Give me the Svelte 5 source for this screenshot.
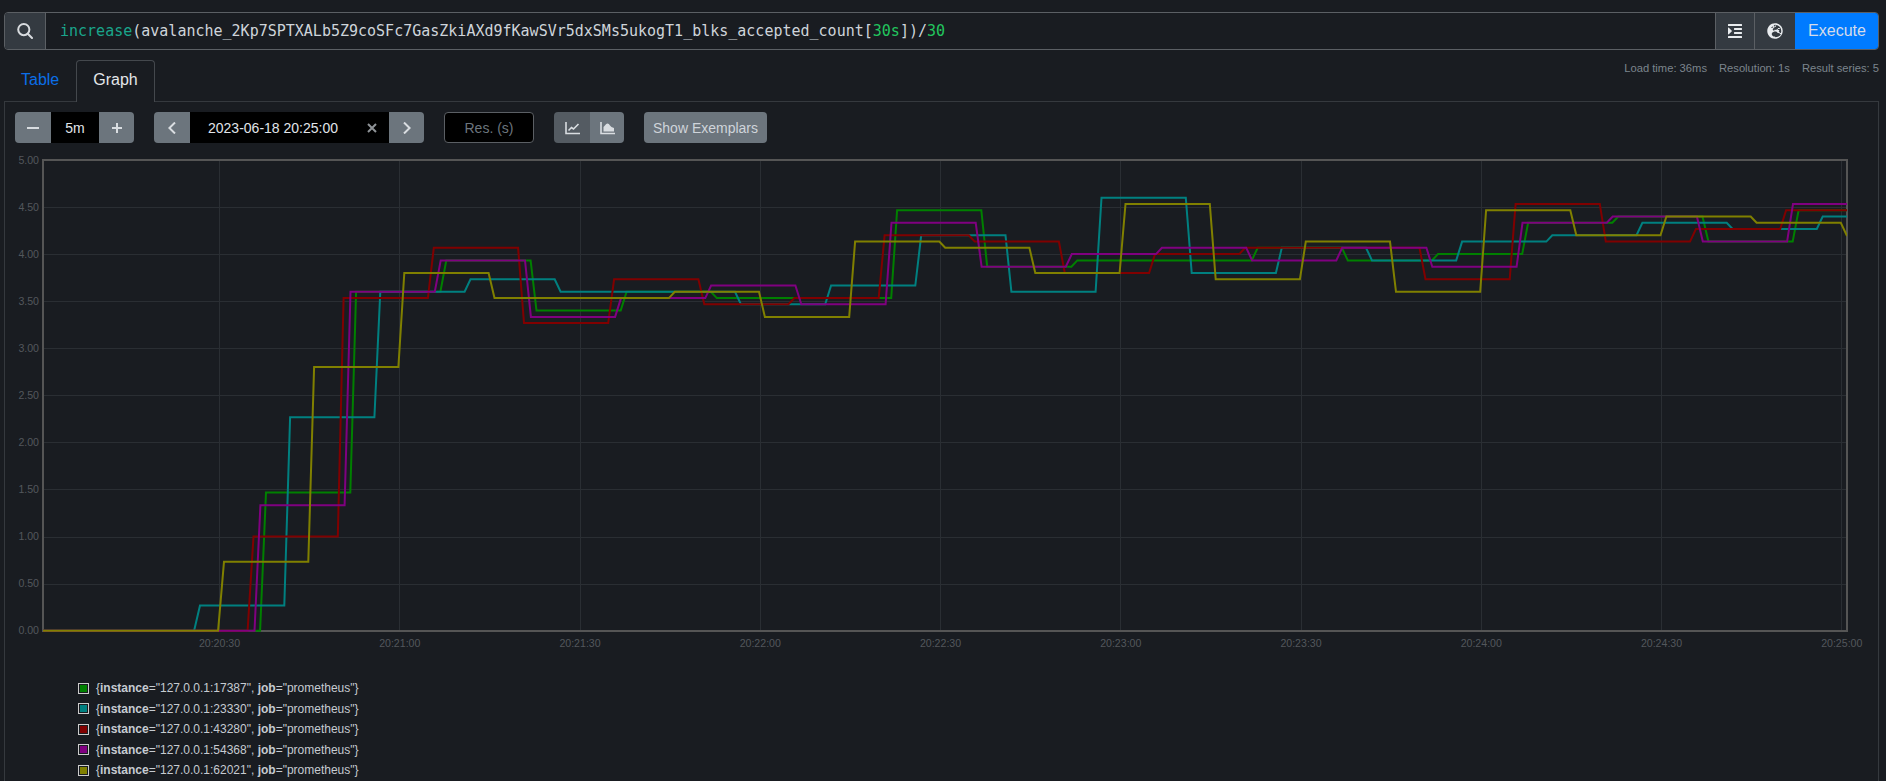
<script>
  const X0 = 43, X1 = 1847, Y0 = 630.7, UNIT = 94.14, STEP = 90.15, RAMP = 5.9;
  const yOf = (v) => Y0 - v * UNIT;
  const series = [
    { color: '#008000', port: '17387', t0: 266, values: [1.467,3.6,3.933,3.4,3.6,3.533,3.533,4.467,3.867,3.933,3.933,4.067,3.933,4,4.333,4.4,4.133,4.467] },
    { color: '#008080', port: '23330', t0: 200, values: [0.267,2.267,3.6,3.733,3.6,3.6,3.467,3.667,4.2,3.6,4.6,3.8,4.067,3.933,4.133,4.2,4.333,4.267,4.4] },
    { color: '#800000', port: '43280', t0: 253.5, values: [1,3.533,4.067,3.267,3.733,3.467,3.533,4.2,4.133,3.8,4,4.067,4.067,3.733,4.533,4.133,4.267,4.467] },
    { color: '#800080', port: '54368', t0: 260.4, values: [1.333,3.6,3.933,3.333,3.533,3.667,3.467,4.333,3.867,4,4.067,3.933,4.067,3.867,4.333,4.4,4.133,4.533] },
    { color: '#808000', port: '62021', t0: 224, values: [0.733,2.8,3.8,3.533,3.533,3.6,3.333,4.133,4.067,3.8,4.533,3.733,4.133,3.6,4.467,4.2,4.4,4.333,4.2] }
  ];
  const pathOf = (s) => {
    const pts = [[X0, 0]];
    let prev = 0;
    s.values.forEach((v, k) => {
      const x = s.t0 + k * STEP;
      pts.push([x - RAMP, prev], [x, v]);
      prev = v;
    });
    pts.push([X1 + 10, prev]);
    return pts.map(([x, v]) => `${x.toFixed(1)},${yOf(v).toFixed(1)}`).join(' ');
  };
  const yTicks = [0, 0.5, 1, 1.5, 2, 2.5, 3, 3.5, 4, 4.5, 5];
  const xTicks = ['20:20:30','20:21:00','20:21:30','20:22:00','20:22:30','20:23:00','20:23:30','20:24:00','20:24:30','20:25:00']
    .map((label, i) => ({ label, x: 219 + i * 180.25 }));
</script>

<div class="page">
  <div class="query">
    <div class="addon search">
      <svg class="stroke" viewBox="0 0 16 16" width="16" height="16"><circle cx="6.8" cy="6.6" r="5.6"/><path d="M10.8 10.8L15 15" stroke-linecap="round"/></svg>
    </div>
    <div class="expr"><span class="fn">increase</span>(avalanche_2Kp7SPTXALb5Z9coSFc7GasZkiAXd9fKawSVr5dxSMs5ukogT1_blks_accepted_count[<span class="num">30s</span>])/<span class="num">30</span></div>
    <div class="addon fmt">
      <svg viewBox="0 0 448 512" width="14" height="16"><path fill="currentColor" d="M27.31 363.3l96-96a16 16 0 0 0 0-22.62l-96-96C17.27 138.66 0 145.78 0 160v192c0 14.31 17.33 21.3 27.31 11.3zM432 416H16a16 16 0 0 0-16 16v32a16 16 0 0 0 16 16h416a16 16 0 0 0 16-16v-32a16 16 0 0 0-16-16zm3.17-128H204.83A12.82 12.82 0 0 0 192 300.83v38.34A12.82 12.82 0 0 0 204.83 352h230.34A12.82 12.82 0 0 0 448 339.17v-38.34A12.82 12.82 0 0 0 435.17 288zm0-128H204.83A12.82 12.82 0 0 0 192 172.83v38.34A12.82 12.82 0 0 0 204.83 224h230.34A12.82 12.82 0 0 0 448 211.17v-38.34A12.82 12.82 0 0 0 435.17 160zM432 32H16A16 16 0 0 0 0 48v32a16 16 0 0 0 16 16h416a16 16 0 0 0 16-16V48a16 16 0 0 0-16-16z"/></svg>
    </div>
    <div class="addon globe">
      <svg viewBox="0 0 496 512" width="16" height="16"><path fill="currentColor" d="M248 8C111 8 0 119 0 256s111 248 248 248 248-111 248-248S385 8 248 8zm200 248c0 22.5-3.9 44.2-10.8 64.4h-20.3c-4.3 0-8.4-1.7-11.4-4.8l-32-32.6c-4.5-4.6-4.5-12.1.1-16.7l12.5-12.5v-8.7c0-3-1.2-5.9-3.3-8l-9.4-9.4c-2.1-2.1-5-3.3-8-3.3h-16c-6.2 0-11.3-5.1-11.3-11.3 0-3 1.2-5.9 3.3-8l9.4-9.4c2.1-2.1 5-3.3 8-3.3h32c6.2 0 11.3-5.1 11.3-11.3v-9.4c0-6.2-5.1-11.3-11.3-11.3h-36.7c-8.8 0-16 7.2-16 16v4.5c0 6.9-4.4 13-10.9 15.2l-31.6 10.5c-3.3 1.1-5.5 4.1-5.5 7.6v2.2c0 4.4-3.6 8-8 8h-16c-4.4 0-8-3.6-8-8s-3.6-8-8-8H247c-3 0-5.8 1.7-7.2 4.4l-9.4 18.7c-2.7 5.4-8.2 8.8-14.3 8.8H194c-8.8 0-16-7.2-16-16V199c0-4.2 1.7-8.3 4.7-11.3l20.1-20.1c4.6-4.6 7.2-10.9 7.2-17.5 0-3.4 2.2-6.5 5.5-7.6l40-13.3c1.7-.6 3.2-1.5 4.4-2.7l26.8-26.8c2.1-2.1 3.3-5 3.3-8 0-6.2-5.1-11.3-11.3-11.3H258l-16 16v8c0 4.4-3.6 8-8 8h-16c-4.4 0-8-3.6-8-8v-20c0-2.5 1.2-4.9 3.2-6.4l28.9-21.7c1.9-.1 3.8-.3 5.7-.3C358.3 56 448 145.7 448 256zM130.1 149.1c0-3 1.2-5.9 3.3-8l25.4-25.4c2.1-2.1 5-3.3 8-3.3 6.2 0 11.3 5.1 11.3 11.3v16c0 3-1.2 5.9-3.3 8l-9.4 9.4c-2.1 2.1-5 3.3-8 3.3h-16c-6.2 0-11.3-5.1-11.3-11.3zm128 306.4v-7.1c0-8.8-7.2-16-16-16h-20.2c-10.8 0-26.7-5.3-35.4-11.8l-22.2-16.7c-11.5-8.6-18.2-22.1-18.2-36.4v-23.9c0-16 8.4-30.8 22.1-39l42.9-25.7c7.1-4.2 15.2-6.5 23.4-6.5h31.2c10.9 0 21.4 3.9 29.6 10.9l43.2 37.1h18.3c17 0 33.3 6.7 45.3 18.7l17.3 17.3c5 5 11.8 7.8 18.9 7.8h5.4C400.9 420.6 333.5 452.4 258.1 455.5z"/></svg>
    </div>
    <button class="execute">Execute</button>
  </div>

  <div class="tabs">
    <span class="tab">Table</span>
    <span class="tab active">Graph</span>
    <div class="stats">
      <span>Load time: 36ms</span><span>Resolution: 1s</span><span>Result series: 5</span>
    </div>
  </div>

  <div class="panel">
    <div class="controls">
      <div class="group range">
        <span class="btn sq"><svg class="stroke" viewBox="0 0 12 12" width="12" height="12"><path d="M0 6H12"/></svg></span>
        <span class="field w48">5m</span>
        <span class="btn sq"><svg class="stroke" viewBox="0 0 12 12" width="12" height="12"><path d="M1 6H11M6 1V11"/></svg></span>
      </div>
      <div class="group date">
        <span class="btn sq"><svg class="stroke" viewBox="0 0 8 12" width="8" height="12"><path d="M7 .5L1.4 6L7 11.5"/></svg></span>
        <span class="field w199">
          <span>2023-06-18 20:25:00</span>
          <svg class="stroke clear" viewBox="0 0 10 10" width="10" height="10"><path d="M1 1L9 9M9 1L1 9"/></svg>
        </span>
        <span class="btn sq"><svg class="stroke" viewBox="0 0 8 12" width="8" height="12"><path d="M1 .5L6.6 6L1 11.5"/></svg></span>
      </div>
      <span class="res">Res. (s)</span>
      <div class="group kind">
        <span class="btn ico on"><svg class="stroke thin" viewBox="0 0 15 14" width="15" height="14"><path d="M1 1V12.5H15"/><path d="M3.5 9.5L6.5 6.5L8.5 8L13.5 3"/></svg></span>
        <span class="btn ico"><svg class="stroke thin" viewBox="0 0 15 14" width="15" height="14"><path d="M1 1V12.5H15"/><path class="blob" d="M3.5 10.5V6L6 3.2C7.5 1.8 9 2.8 10 4.5L11.5 6L14 7V10.5Z"/></svg></span>
      </div>
      <span class="btn exemplars">Show Exemplars</span>
    </div>

    <svg class="chart" width="1882" height="520" viewBox="0 150 1882 520">
      <defs><clipPath id="plot"><rect x={X0} y="150" width={X1 - X0} height="490" /></clipPath></defs>
      {#each yTicks as v}
        <line class="grid" x1={X0} x2={X1} y1={Math.round(yOf(v)) + 0.5} y2={Math.round(yOf(v)) + 0.5} />
        <text class="tick" x="39" y={yOf(v) + 3.5} text-anchor="end">{v.toFixed(2)}</text>
      {/each}
      {#each xTicks as t}
        <line class="grid" x1={Math.round(t.x) + 0.5} x2={Math.round(t.x) + 0.5} y1="160" y2="631" />
        <text class="tick" x={t.x + 0.5} y="647" text-anchor="middle">{t.label}</text>
      {/each}
      <rect class="frame" x={X0} y="160" width={X1 - X0} height="471" />
      <g clip-path="url(#plot)">
        {#each series as s}
          <polyline points={pathOf(s)} stroke={s.color} />
        {/each}
      </g>
    </svg>

    <div class="legend">
      {#each series as s}
        <div class="row">
          <span class="swatch"><i style="background:{s.color}"></i></span>
          <span>{'{'}<b>instance</b>="127.0.0.1:{s.port}", <b>job</b>="prometheus"{'}'}</span>
        </div>
      {/each}
    </div>
  </div>
</div>

<style>
  :global(body) {
    margin: 0;
    background: #191c21;
    overflow: hidden;
  }
  .page {
    width: 1886px;
    height: 781px;
    overflow: hidden;
    box-sizing: border-box;
    padding: 12px 7px 0 4px;
    font-family: "Liberation Sans", sans-serif;
    color: #d5dae2;
  }
  .stroke {
    fill: none;
    stroke: currentColor;
    stroke-width: 2;
  }
  .stroke.thin { stroke-width: 1.6; }
  .stroke .blob { fill: currentColor; stroke: none; }
  .query {
    display: flex;
    height: 38px;
    box-sizing: border-box;
    border: 1px solid #5b5f64;
    border-radius: 4px;
    overflow: hidden;
  }
  .addon {
    display: flex;
    align-items: center;
    justify-content: center;
    background: #343a41;
    color: #e9ecef;
    flex: none;
  }
  .search { width: 40px; border-right: 1px solid #5b5f64; color: #d8dbdf; }
  .fmt { width: 39px; border-left: 1px solid #5b5f64; box-sizing: border-box; }
  .globe { width: 41px; border-left: 1px solid #5b5f64; box-sizing: border-box; }
  .expr {
    flex: 1;
    padding-left: 14px;
    font: 15px/36px "DejaVu Sans Mono", monospace;
    color: #ced4da;
    white-space: nowrap;
  }
  .fn { color: #1aa58b; }
  .num { color: #22c55e; }
  .execute {
    width: 84px;
    margin: -1px -1px -1px 0;
    border: 0;
    background: #007bff;
    color: #d6dcea;
    font: 16px "Liberation Sans", sans-serif;
    padding: 0;
  }
  .tabs {
    display: flex;
    align-items: flex-end;
    height: 51px;
    box-sizing: border-box;
  }
  .tab {
    display: block;
    box-sizing: border-box;
    height: 41px;
    padding: 0 16px;
    line-height: 38px;
    font-size: 16px;
    color: #0b6fe8;
    border: 1px solid transparent;
    border-bottom: 0;
    border-radius: 4px 4px 0 0;
  }
  .tab.active {
    color: #e4e7ea;
    border-color: #44484d;
    background: #191c21;
    position: relative;
    z-index: 1;
    height: 42px;
    margin-bottom: -1px;
  }
  .stats {
    margin-left: auto;
    align-self: flex-start;
    margin-top: 12px;
    display: flex;
    gap: 12px;
    font-size: 11.2px;
    line-height: 13px;
    color: #7c858d;
  }
  .panel {
    border: 1px solid #35393e;
    border-bottom: 0;
    height: 680px;
    box-sizing: border-box;
  }
  .controls {
    display: flex;
    height: 31px;
    margin: 10px 0 0 10px;
    font-size: 14px;
  }
  .group {
    display: flex;
    border-radius: 4px;
    overflow: hidden;
    height: 31px;
  }
  .range { width: 119px; }
  .date { width: 270px; margin-left: 20px; }
  .kind { width: 70px; margin-left: 20px; }
  .btn {
    display: flex;
    align-items: center;
    justify-content: center;
    background: #6c757d;
    color: #d9dde1;
    flex: none;
  }
  .sq { width: 36px; }
  .group.range .sq:last-child { width: 35px; }
  .group.date .sq:last-child { width: 35px; }
  .ico { width: 35px; }
  .ico.on { width: 36px; background: #545b62; }
  .field {
    background: #000;
    color: #e1e5ea;
    display: flex;
    align-items: center;
    justify-content: center;
    flex: none;
    box-sizing: border-box;
  }
  .w48 { width: 48px; }
  .w199 { width: 199px; position: relative; padding-right: 33px; }
  .clear { position: absolute; right: 12px; top: 11px; color: #8f9397; }
  .res {
    width: 90px;
    margin-left: 20px;
    box-sizing: border-box;
    border: 1px solid #5b5f64;
    border-radius: 4px;
    background: #000;
    color: #6c757d;
    display: flex;
    align-items: center;
    justify-content: center;
  }
  .exemplars {
    width: 123px;
    margin-left: 20px;
    border-radius: 4px;
    color: #cfd4da;
  }
  .chart { display: block; margin: 7px 0 0 -5px; }
  .grid { stroke: #2a2e33; stroke-width: 1; }
  .frame { fill: none; stroke: #555; stroke-width: 2; }
  .tick { fill: #53575c; font-size: 10.6px; }
  polyline { fill: none; stroke-width: 2; stroke-linejoin: miter; }
  .legend {
    margin: 8px 0 0 73px;
    font-size: 12px;
    color: #c6cbd1;
  }
  .row {
    display: flex;
    align-items: center;
    height: 20.5px;
    gap: 7px;
    white-space: nowrap;
  }
  .swatch {
    width: 11px;
    height: 11px;
    box-sizing: border-box;
    border: 1px solid #ccc;
    padding: 1px;
    display: block;
    flex: none;
  }
  .swatch i { display: block; width: 100%; height: 100%; }
</style>
